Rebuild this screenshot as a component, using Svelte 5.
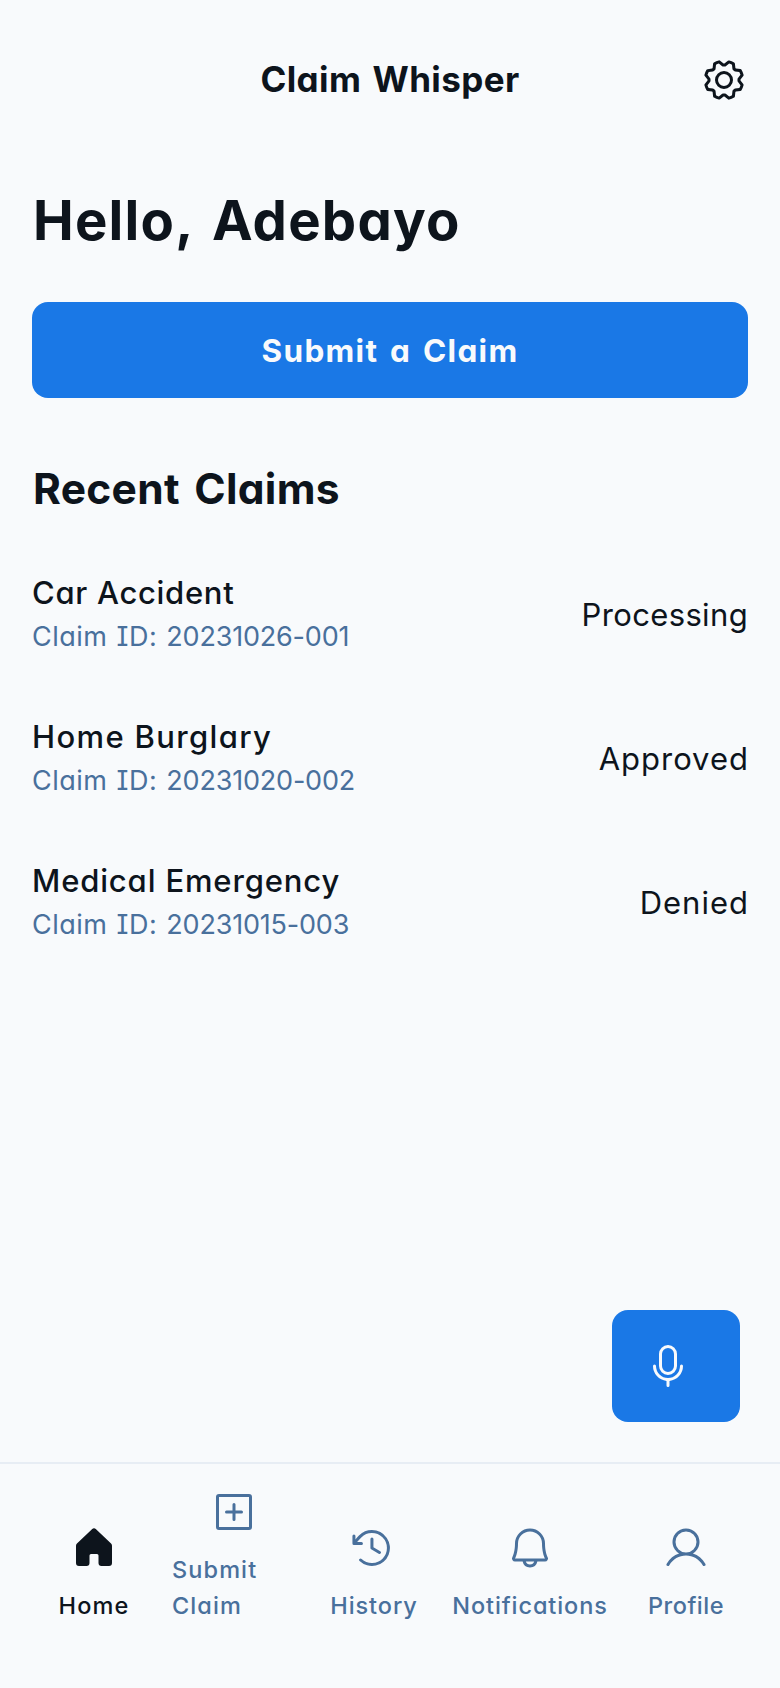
<script>
  const claims = [
    { name: 'Car Accident', id: '20231026-001', status: 'Processing' },
    { name: 'Home Burglary', id: '20231020-002', status: 'Approved' },
    { name: 'Medical Emergency', id: '20231015-003', status: 'Denied' }
  ];

  const gear =
    'M128,80a48,48,0,1,0,48,48A48.05,48.05,0,0,0,128,80Zm0,80a32,32,0,1,1,32-32A32,32,0,0,1,128,160Zm88-29.84q.06-2.16,0-4.32l14.92-18.64a8,8,0,0,0,1.48-7.06,107.21,107.21,0,0,0-10.88-26.25,8,8,0,0,0-6-3.93l-23.72-2.64q-1.48-1.56-3-3L186,40.54a8,8,0,0,0-3.94-6,107.71,107.71,0,0,0-26.25-10.87,8,8,0,0,0-7.06,1.49L130.16,40Q128,40,125.84,40L107.2,25.11a8,8,0,0,0-7.06-1.48A107.6,107.6,0,0,0,73.89,34.51a8,8,0,0,0-3.93,6L67.32,64.27q-1.56,1.49-3,3L40.54,70a8,8,0,0,0-6,3.94,107.71,107.71,0,0,0-10.87,26.25,8,8,0,0,0,1.49,7.06L40,125.84Q40,128,40,130.16L25.11,148.8a8,8,0,0,0-1.48,7.06,107.21,107.21,0,0,0,10.88,26.25,8,8,0,0,0,6,3.93l23.72,2.64q1.49,1.56,3,3L70,215.46a8,8,0,0,0,3.94,6,107.71,107.71,0,0,0,26.25,10.87,8,8,0,0,0,7.06-1.49L125.84,216q2.16.06,4.32,0l18.64,14.92a8,8,0,0,0,7.06,1.48,107.21,107.21,0,0,0,26.25-10.88,8,8,0,0,0,3.93-6l2.64-23.72q1.56-1.48,3-3L215.46,186a8,8,0,0,0,6-3.94,107.71,107.71,0,0,0,10.87-26.25,8,8,0,0,0-1.49-7.06Zm-16.1-6.5a73.93,73.93,0,0,1,0,8.68,8,8,0,0,0,1.74,5.48l14.19,17.73a91.57,91.57,0,0,1-6.23,15L187,173.11a8,8,0,0,0-5.1,2.64,74.11,74.11,0,0,1-6.14,6.14,8,8,0,0,0-2.64,5.1l-2.51,22.58a91.32,91.32,0,0,1-15,6.23l-17.74-14.19a8,8,0,0,0-5-1.75h-.48a73.93,73.93,0,0,1-8.68,0,8,8,0,0,0-5.48,1.74L100.45,215.8a91.57,91.57,0,0,1-15-6.23L82.89,187a8,8,0,0,0-2.64-5.1,74.11,74.11,0,0,1-6.14-6.14,8,8,0,0,0-5.1-2.64L46.43,170.6a91.32,91.32,0,0,1-6.23-15l14.19-17.74a8,8,0,0,0,1.74-5.48,73.93,73.93,0,0,1,0-8.68,8,8,0,0,0-1.74-5.48L40.2,100.45a91.57,91.57,0,0,1,6.23-15L69,82.89a8,8,0,0,0,5.1-2.64,74.11,74.11,0,0,1,6.14-6.14A8,8,0,0,0,82.89,69L85.4,46.43a91.32,91.32,0,0,1,15-6.23l17.74,14.19a8,8,0,0,0,5.48,1.74,73.93,73.93,0,0,1,8.68,0,8,8,0,0,0,5.48-1.74L155.55,40.2a91.57,91.57,0,0,1,15,6.23L173.11,69a8,8,0,0,0,2.64,5.1,74.11,74.11,0,0,1,6.14,6.14,8,8,0,0,0,5.1,2.64l22.58,2.51a91.32,91.32,0,0,1,6.23,15l-14.19,17.74A8,8,0,0,0,199.87,123.66Z';
  const mic =
    'M128,176a48.05,48.05,0,0,0,48-48V64a48,48,0,0,0-96,0v64A48.05,48.05,0,0,0,128,176ZM96,64a32,32,0,0,1,64,0v64a32,32,0,0,1-64,0Zm40,143.6V232a8,8,0,0,1-16,0V207.6A80.11,80.11,0,0,1,48,128a8,8,0,0,1,16,0,64,64,0,0,0,128,0,8,8,0,0,1,16,0A80.11,80.11,0,0,1,136,207.6Z';

  const tabs = [
    {
      key: 'home',
      label: 'Home',
      icon: 'M224,115.55V208a16,16,0,0,1-16,16H168a16,16,0,0,1-16-16V168a8,8,0,0,0-8-8H112a8,8,0,0,0-8,8v40a16,16,0,0,1-16,16H48a16,16,0,0,1-16-16V115.55a16,16,0,0,1,5.17-11.78l80-75.48.11-.11a16,16,0,0,1,21.53,0,1.14,1.14,0,0,0,.11.11l80,75.48A16,16,0,0,1,224,115.55Z'
    },
    {
      key: 'submit',
      label: 'Submit Claim',
      icon: 'M208,32H48A16,16,0,0,0,32,48V208a16,16,0,0,0,16,16H208a16,16,0,0,0,16-16V48A16,16,0,0,0,208,32Zm0,176H48V48H208V208ZM80,128a8,8,0,0,1,8-8h32V88a8,8,0,0,1,16,0v32h32a8,8,0,0,1,0,16H136v32a8,8,0,0,1-16,0V136H88A8,8,0,0,1,80,128Z'
    },
    {
      key: 'history',
      label: 'History',
      viewBox: '11 0 256 256',
      icon: 'M136,80v43.47l36.12,21.67a8,8,0,0,1-8.24,13.72l-40-24A8,8,0,0,1,120,128V80a8,8,0,0,1,16,0Zm-8-48A95.44,95.44,0,0,0,60.08,60.15C52.81,67.51,46.35,74.59,40,82V64a8,8,0,0,0-16,0v40a8,8,0,0,0,8,8H72a8,8,0,0,0,0-16H49c7.15-8.42,14.27-16.35,22.39-24.57a80,80,0,1,1,1.66,114.75,8,8,0,1,0-11,11.64A96,96,0,1,0,128,32Z'
    },
    {
      key: 'notifications',
      label: 'Notifications',
      icon: 'M221.8,175.94C216.25,166.38,208,139.33,208,104a80,80,0,1,0-160,0c0,35.34-8.26,62.38-13.81,71.94A16,16,0,0,0,48,200H88.81a40,40,0,0,0,78.38,0H208a16,16,0,0,0,13.8-24.06ZM128,216a24,24,0,0,1-22.62-16h45.24A24,24,0,0,1,128,216ZM48,184c7.7-13.24,16-43.92,16-80a64,64,0,1,1,128,0c0,36.05,8.28,66.73,16,80Z'
    },
    {
      key: 'profile',
      label: 'Profile',
      icon: 'M230.92,212c-15.23-26.33-38.7-45.21-66.09-54.16a72,72,0,1,0-73.66,0C63.78,166.78,40.31,185.66,25.08,212a8,8,0,1,0,13.85,8c18.84-32.56,52.14-52,89.07-52s70.23,19.44,89.07,52a8,8,0,1,0,13.85-8ZM72,96a56,56,0,1,1,56,56A56.06,56.06,0,0,1,72,96Z'
    }
  ];
</script>

{#snippet glyph(d, viewBox = '0 0 256 256')}
  <svg {viewBox} width="48" height="48" fill="currentColor" aria-hidden="true"><path {d} /></svg>
{/snippet}

<div class="screen">
  <header>
    <h2>Claim Whisper</h2>
    <button class="settings" aria-label="Settings">{@render glyph(gear)}</button>
  </header>

  <main>
    <h1>Hello, Adebayo</h1>
    <button class="primary">Submit a Claim</button>
    <h3>Recent Claims</h3>
    {#each claims as claim}
      <article>
        <div>
          <p class="name">{claim.name}</p>
          <p class="id">Claim ID: <span class="number">{claim.id}</span></p>
        </div>
        <p class="status">{claim.status}</p>
      </article>
    {/each}
  </main>

  <div class="voice-row">
    <button class="voice" aria-label="Voice">{@render glyph(mic)}</button>
  </div>

  <nav>
    {#each tabs as tab}
      <a href="#{tab.key}" class="{tab.key}" class:active={tab.key === 'home'}>
        <span class="icon">{@render glyph(tab.icon, tab.viewBox)}</span>
        <span class="label">{tab.label}</span>
      </a>
    {/each}
  </nav>
</div>

<style>
  :global(body) {
    margin: 0;
    background: #f8fafc;
  }
  .screen {
    display: flex;
    flex-direction: column;
    width: 780px;
    height: 1688px;
    background: #f8fafc;
    color: #0d141c;
    font-family: Inter, 'Noto Sans', sans-serif;
    font-feature-settings: 'cv11', 'cv08';
  }
  h1, h2, h3, p {
    margin: 0;
    white-space: nowrap;
  }
  button {
    border: 0;
    padding: 0;
    font: inherit;
    font-feature-settings: inherit;
    color: inherit;
    background: none;
  }
  svg {
    display: block;
  }
  header {
    display: grid;
    grid-template-columns: 96px 1fr 96px;
    align-items: center;
    box-sizing: border-box;
    height: 144px;
    padding: 32px 32px 16px;
  }
  h2 {
    grid-column: 2;
    padding-bottom: 2px;
    font-size: 35px;
    line-height: 45px;
    font-weight: 700;
    text-align: center;
    letter-spacing: 0.4px;
    word-spacing: 2.5px;
  }
  .settings {
    display: flex;
    justify-content: flex-end;
  }
  main {
    flex: 1;
    padding: 0 32px;
  }
  h1 {
    padding: 41px 0 23px 1px;
    font-size: 54.5px;
    line-height: 70px;
    font-weight: 700;
    letter-spacing: 1.2px;
    word-spacing: 5px;
  }
  .primary {
    display: block;
    width: 100%;
    height: 96px;
    margin: 24px 0;
    border-radius: 16px;
    background: #1a78e6;
    color: #f8fafc;
    font-size: 31.5px;
    font-weight: 700;
    letter-spacing: 1.3px;
    word-spacing: 3px;
  }
  h3 {
    padding: 39px 0 25px 1px;
    font-size: 42.5px;
    line-height: 55px;
    font-weight: 700;
    letter-spacing: 0.3px;
    word-spacing: 4px;
  }
  article {
    display: flex;
    justify-content: space-between;
    align-items: center;
    height: 144px;
  }
  .name {
    padding-top: 1px;
    font-size: 31px;
    line-height: 47px;
    font-weight: 500;
    letter-spacing: 0.7px;
  }
  article:nth-of-type(2) .name {
    letter-spacing: 1.35px;
  }
  article:nth-of-type(3) .name {
    letter-spacing: 0.85px;
  }
  .id {
    font-size: 27px;
    line-height: 42px;
    color: #49709c;
    letter-spacing: 0.5px;
    word-spacing: 1px;
  }
  .number {
    letter-spacing: -0.2px;
  }
  .status {
    padding-top: 4px;
    font-size: 31px;
    line-height: 48px;
    letter-spacing: 0.35px;
  }
  article:nth-of-type(n + 2) .status {
    letter-spacing: 1px;
    margin-right: -1px;
  }
  .voice-row {
    display: flex;
    justify-content: flex-end;
    padding: 0 40px 40px;
  }
  .voice {
    display: flex;
    align-items: center;
    width: 128px;
    height: 112px;
    padding-left: 32px;
    border-radius: 16px;
    background: #1a78e6;
    color: #f8fafc;
  }
  nav {
    display: grid;
    grid-template-columns: 1fr 1fr 1fr 156px 1fr;
    column-gap: 16px;
    padding: 16px 32px 64px;
    border-top: 2px solid #e7edf4;
  }
  nav a {
    display: flex;
    flex-direction: column;
    align-items: center;
    justify-content: flex-end;
    gap: 8px;
    color: #49709c;
    text-decoration: none;
  }
  nav a.active {
    color: #0d141c;
  }
  .icon {
    display: flex;
    align-items: center;
    height: 64px;
  }
  .label {
    font-size: 23.5px;
    line-height: 36px;
    font-weight: 500;
    letter-spacing: 0.9px;
  }
  .home .label {
    letter-spacing: 1.1px;
  }
  .submit .label {
    align-self: stretch;
    width: 100px;
    letter-spacing: 1.1px;
  }
  .profile .label {
    letter-spacing: 0.5px;
  }
</style>
